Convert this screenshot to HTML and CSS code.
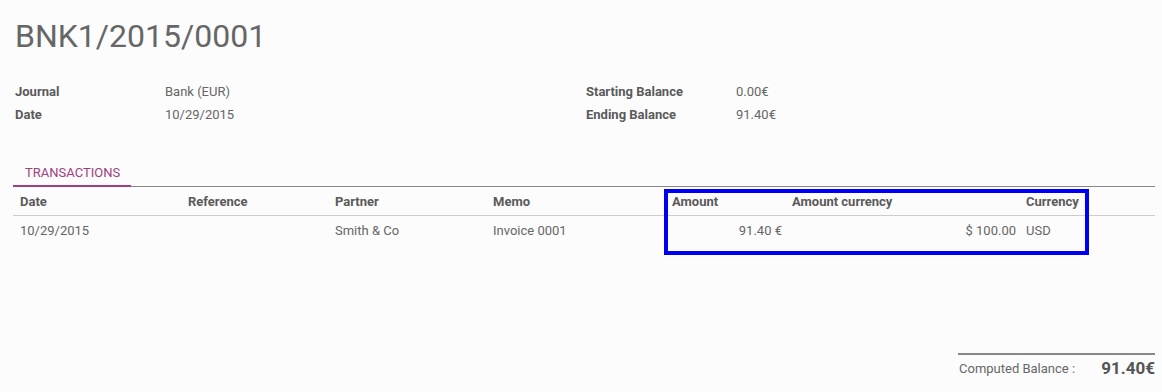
FILE: index.html
```html
<!DOCTYPE html>
<html lang="en">
<head>
  <meta charset="UTF-8">
  <title>BNK1/2015/0001</title>
  <link rel="stylesheet" href="styles.css">
</head>
<body>
  <div class="sheet">
    <h1 class="title">BNK1/2015/0001</h1>

    <div class="info">
      <div class="info-col">
        <div class="info-row"><span class="label">Journal</span><span class="value">Bank (EUR)</span></div>
        <div class="info-row"><span class="label">Date</span><span class="value">10/29/2015</span></div>
      </div>
      <div class="info-col">
        <div class="info-row"><span class="label">Starting Balance</span><span class="value">0.00€</span></div>
        <div class="info-row"><span class="label">Ending Balance</span><span class="value">91.40€</span></div>
      </div>
    </div>

    <div class="tabs">
      <div class="tab active">TRANSACTIONS</div>
    </div>

    <div class="table-wrap">
      <table class="lines">
        <thead>
          <tr>
            <th class="c-date">Date</th>
            <th class="c-ref">Reference</th>
            <th class="c-partner">Partner</th>
            <th class="c-memo">Memo</th>
            <th class="c-amount">Amount</th>
            <th class="c-amcur">Amount currency</th>
            <th class="c-cur">Currency</th>
          </tr>
        </thead>
        <tbody>
          <tr>
            <td>10/29/2015</td>
            <td></td>
            <td>Smith &amp; Co</td>
            <td>Invoice 0001</td>
            <td class="num">91.40 €</td>
            <td class="num">$ 100.00</td>
            <td>USD</td>
          </tr>
        </tbody>
      </table>
      <div class="highlight"></div>
    </div>

    <div class="totals">
      <div class="total-row">
        <span class="total-label">Computed Balance :</span>
        <span class="total-value">91.40€</span>
      </div>
    </div>
  </div>
</body>
</html>
```

FILE: styles.css
```css
html, body { margin: 0; background: #fcfcfc; }
body { font-family: Roboto, "Noto Sans", sans-serif; color: #666; font-size: 13px; }
.sheet { width: 1142px; padding: 0 7px 0 13px; height: 392px; overflow: hidden; }

.title { margin: 0; padding: 16px 0 0 2px; font-size: 32px; font-weight: 400; line-height: 40px; color: #666; }

.info { display: flex; margin-top: 24px; }
.info-col { width: 569px; padding-left: 2px; }
.info-row { display: flex; height: 23px; align-items: center; }
.label { width: 150px; font-weight: 700; color: #5a5a5a; }
.value { color: #666; }

.tabs { display: flex; margin-top: 35px; border-bottom: 1px solid #888; }
.tab { padding: 0 12px; height: 26px; line-height: 26px; font-size: 13px; color: #a0407f; }
.tab.active { border-bottom: 2px solid #a0407f; margin-bottom: -1px; height: 24px; line-height: 24px; padding-right: 11px; }

.table-wrap { position: relative; }
.lines { width: 100%; border-collapse: collapse; table-layout: fixed; }
.lines th { text-align: left; font-weight: 700; color: #5a5a5a; height: 28px; padding: 0 4px 0 7px; border-bottom: 1px solid #ccc; vertical-align: middle; white-space: nowrap; }
.lines td { height: 29px; padding: 0 4px 0 7px; color: #666; vertical-align: middle; white-space: nowrap; }
.lines td.num { text-align: right; padding-right: 3px; }
.c-date { width: 157px; }
.c-ref { width: 136px; }
.c-partner { width: 147px; }
.c-memo { width: 168px; }
.c-amount { width: 109px; }
.c-amcur { width: 223px; }

.highlight { position: absolute; left: 651px; top: 2px; width: 417px; height: 58px; border: 4px solid #0000f0; pointer-events: none; }

.totals { display: flex; justify-content: flex-end; margin-top: 108px; }
.total-row { width: 196px; border-top: 2px solid #888; display: flex; justify-content: space-between; align-items: center; height: 26px; padding-left: 1px; }
.total-label { font-size: 13px; color: #666; }
.total-value { font-size: 17px; font-weight: 700; color: #555; }
```
